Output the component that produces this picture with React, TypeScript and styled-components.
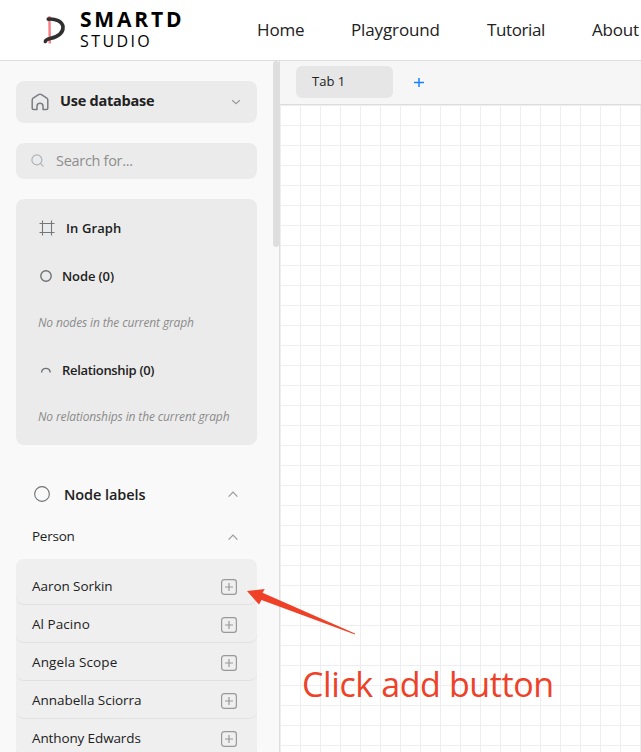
import React from "react";
import styled, { createGlobalStyle } from "styled-components";
import { Search } from "lucide-react";

const GlobalStyle = createGlobalStyle`
  *, *::before, *::after { box-sizing: border-box; }
  body {
    margin: 0;
    overflow: hidden;
    font-family: "Open Sans", "Noto Sans", sans-serif;
    color: #212121;
    background: #fff;
  }
`;

const Page = styled.div`
  position: relative;
  width: 641px;
  height: 752px;
  display: flex;
  flex-direction: column;
  overflow: hidden;
`;

const Label = styled.span<{ $track?: number }>`
  white-space: nowrap;
  letter-spacing: ${(p) => p.$track ?? 0}px;
`;

const Header = styled.header`
  flex: 0 0 61px;
  display: flex;
  border-bottom: 1px solid #dcdee0;
  background: #fff;
`;

const Brand = styled.div`
  flex: 0 0 256px;
  display: flex;
  padding: 14px 0 0 42px;
`;

const BrandText = styled.div`
  display: flex;
  flex-direction: column;
  margin: -7px 0 0 13px;
  color: #000;
`;

const BrandName = styled(Label)`
  font-size: 21px;
  line-height: 24px;
  font-weight: 700;
`;

const BrandSub = styled(Label)`
  font-size: 16px;
  line-height: 20px;
`;

const Nav = styled.nav`
  display: flex;
  padding-left: 1px;
  font-size: 17px;
  line-height: 60px;
`;

const NavItem = styled(Label)<{ $width: number }>`
  flex: 0 0 ${(p) => p.$width}px;
`;

const Body = styled.div`
  flex: 1;
  display: flex;
  min-height: 0;
`;

const Sidebar = styled.aside`
  flex: 0 0 280px;
  display: flex;
  justify-content: space-between;
  background: #f9f9f9;
  border-right: 1px solid #dedede;
`;

const SidebarContent = styled.div`
  width: 257px;
  padding: 20px 0 0 16px;
`;

const ScrollThumb = styled.div`
  width: 6px;
  height: 186px;
  border-radius: 3px;
  background: #dedede;
`;

const DatabaseSelect = styled.div`
  height: 42px;
  display: flex;
  align-items: center;
  padding: 0 15px 0 14px;
  border-radius: 8px;
  background: #ebebeb;
  font-size: 14.5px;
  font-weight: 700;

  ${Label} { flex: 1; margin: -3px 0 0 10px; }
`;

const SearchBox = styled.div`
  height: 36px;
  display: flex;
  align-items: center;
  gap: 11px;
  margin-top: 20px;
  padding: 0 0 1px 14px;
  border-radius: 8px;
  background: #ebebeb;
  color: #8e8e8e;
  font-size: 14.5px;

  svg { color: #b0b4b7; }
`;

const GraphCard = styled.section`
  height: 246px;
  margin-top: 20px;
  padding-top: 5px;
  border-radius: 8px;
  background: #ebebeb;
`;

const CardRow = styled.div<{ $height: number; $left: number; $gap: number }>`
  height: ${(p) => p.$height}px;
  display: flex;
  align-items: center;
  gap: ${(p) => p.$gap}px;
  padding-left: ${(p) => p.$left}px;
  font-size: 13px;
  font-weight: 600;
`;

const EmptyNote = styled.p`
  height: 46px;
  margin: 0;
  padding-left: 22px;
  color: #8b8b8b;
  font-size: 12px;
  line-height: 45px;
  font-style: italic;
`;

const SectionHead = styled.div`
  height: 42px;
  display: flex;
  align-items: center;
  margin-top: 28px;
  padding: 0 17px 0 18px;
  font-size: 14.5px;
  font-weight: 600;

  ${Label} { flex: 1; margin-left: 14px; }
`;

const GroupHead = styled.div`
  height: 44px;
  display: flex;
  align-items: center;
  justify-content: space-between;
  padding: 0 17px 1px 16px;
  font-size: 13.5px;

  ${Label} { margin-top: -1px; }
`;

const PersonList = styled.div`
  border-radius: 8px 8px 0 0;
  background: #efefef;
  padding-top: 8px;
`;

const PersonRow = styled.div`
  height: 38px;
  display: flex;
  align-items: center;
  justify-content: space-between;
  padding: 1px 20px 0 16px;
  border-bottom: 1px solid #e1e1e1;
  border-radius: 0 0 8px 8px;
  font-size: 13.5px;

  svg { margin-top: 1px; }
`;

const Main = styled.main`
  flex: 1;
  min-width: 0;
  display: flex;
  flex-direction: column;
`;

const TabBar = styled.div`
  flex: 0 0 44px;
  display: flex;
  align-items: center;
  gap: 20px;
  padding: 0 0 2px 16px;
  background: #f6f6f6;
  border-bottom: 1px solid #dcdcdc;
`;

const Tab = styled.div`
  width: 97px;
  height: 32px;
  padding-left: 16px;
  border-radius: 6px;
  background: #e6e6e6;
  font-size: 13px;
  line-height: 31px;
`;

const GridCanvas = styled.div`
  flex: 1;
  background-color: #fff;
  background-image:
    linear-gradient(to right, #eeeeee 1px, transparent 1px),
    linear-gradient(to bottom, #eeeeee 1px, transparent 1px);
  background-size: 20px 20px;
`;

const ArrowOverlay = styled.svg`
  position: absolute;
  left: 240px;
  top: 580px;
`;

const Callout = styled.div`
  position: absolute;
  left: 302px;
  top: 660px;
  color: #ee4128;
  font-size: 34px;
  line-height: 48px;
`;

const BrandMark = () => (
  <svg width="25" height="32" viewBox="0 0 25 32" fill="none">
    <path d="M7.4 2.3 7.8 29.5" stroke="#f87d82" strokeWidth="2.4" />
    <path
      d="M6.3 5.1C13 4.4 20.7 7.3 21 13.2C21.2 20.2 14.4 23 8.2 24.6C5.1 25.4 3.5 26 3.4 27.5"
      stroke="#303030"
      strokeWidth="3.6"
      strokeLinecap="round"
    />
  </svg>
);

const HouseIcon = () => (
  <svg width="20" height="20" viewBox="0 0 20 20" fill="none" stroke="#7a7e82" strokeWidth="1.5" strokeLinejoin="round">
    <path d="M2.2 8.2C2.2 7.3 2.5 6.7 3.2 6.2L8.5 2.7Q10 1.7 11.5 2.7L16.8 6.2C17.5 6.7 17.8 7.3 17.8 8.2V16.2Q17.8 17.6 16.4 17.6H13V14.2A3 3 0 0 0 7 14.2V17.6H3.6Q2.2 17.6 2.2 16.2Z" />
  </svg>
);

const FrameIcon = () => (
  <svg width="16" height="16" viewBox="0 0 16 16" fill="none" stroke="#74787c" strokeWidth="1.1">
    <path d="M.5 3.5H15.5M.5 12.5H15.5M3.5 .5V15.5M12.5 .5V15.5" />
  </svg>
);

const Ring = ({ size, width = 1.3 }: { size: number; width?: number }) => (
  <svg width={size} height={size} fill="none" stroke="#6d7276" strokeWidth={width}>
    <circle cx={size / 2} cy={size / 2} r={(size - width) / 2 - 0.1} />
  </svg>
);

const ArcIcon = () => (
  <svg width="12" height="12" viewBox="0 0 12 12" fill="none" stroke="#6d7276" strokeWidth="1.4">
    <path d="M1.7 8.5V7.6A4.3 4.1 0 0 1 10.1 7.6V8.5" />
  </svg>
);

const Caret = ({ down = false }: { down?: boolean }) => (
  <svg width={down ? 12 : 14} height="12" viewBox={down ? "1 0 12 12" : "0 0 14 12"} fill="none" stroke="#999" strokeWidth="1.2">
    <path d={down ? "M3.2 4.2 7 7.6 10.8 4.2" : "M2.6 8.6 7 4.2 11.4 8.6"} />
  </svg>
);

const AddIcon = () => (
  <svg width="16" height="16" viewBox="0 0 16 16" fill="none" stroke="#999">
    <rect x=".6" y=".6" width="14.8" height="14.8" rx="2.6" strokeWidth="1.2" />
    <path d="M4 8H12M8 4V12" strokeWidth="1.2" />
  </svg>
);

const PlusIcon = () => (
  <svg width="12" height="12" viewBox="0 0 12 12" stroke="#1684ff" strokeWidth="1.5">
    <path d="M1 6.5H11M6 2V11" />
  </svg>
);

const navItems = [
  { text: "Home", width: 94, track: -0.15 },
  { text: "Playground", width: 136, track: -0.13 },
  { text: "Tutorial", width: 105, track: -0.4 },
  { text: "About", width: 60, track: -0.2 },
];

const people = [
  { name: "Aaron Sorkin", track: -0.06 },
  { name: "Al Pacino", track: 0.05 },
  { name: "Angela Scope", track: 0.12 },
  { name: "Annabella Sciorra", track: -0.04 },
  { name: "Anthony Edwards", track: -0.12 },
];

export default function App() {
  return (
    <>
      <GlobalStyle />
      <Page>
        <Header>
          <Brand>
            <BrandMark />
            <BrandText>
              <BrandName $track={2.8}>SMARTD</BrandName>
              <BrandSub $track={2.4}>STUDIO</BrandSub>
            </BrandText>
          </Brand>
          <Nav>
            {navItems.map((item) => (
              <NavItem key={item.text} $width={item.width} $track={item.track}>
                {item.text}
              </NavItem>
            ))}
          </Nav>
        </Header>
        <Body>
          <Sidebar>
            <SidebarContent>
              <DatabaseSelect>
                <HouseIcon />
                <Label $track={-0.25}>Use database</Label>
                <Caret down />
              </DatabaseSelect>
              <SearchBox>
                <Search size={15} strokeWidth={2} />
                <Label $track={-0.3}>Search for...</Label>
              </SearchBox>
              <GraphCard>
                <CardRow $height={48} $left={23} $gap={11}>
                  <FrameIcon />
                  <Label $track={0.1}>In Graph</Label>
                </CardRow>
                <CardRow $height={48} $left={24} $gap={10}>
                  <Ring size={12} width={1.4} />
                  <Label $track={-0.1}>Node (0)</Label>
                </CardRow>
                <EmptyNote>
                  <Label $track={-0.13}>No nodes in the current graph</Label>
                </EmptyNote>
                <CardRow $height={48} $left={24} $gap={10}>
                  <ArcIcon />
                  <Label $track={-0.32}>Relationship (0)</Label>
                </CardRow>
                <EmptyNote>
                  <Label $track={-0.13}>No relationships in the current graph</Label>
                </EmptyNote>
              </GraphCard>
              <SectionHead>
                <Ring size={16} width={1.1} />
                <Label $track={-0.08}>Node labels</Label>
                <Caret />
              </SectionHead>
              <GroupHead>
                <Label $track={-0.25}>Person</Label>
                <Caret />
              </GroupHead>
              <PersonList>
                {people.map((p) => (
                  <PersonRow key={p.name}>
                    <Label $track={p.track}>{p.name}</Label>
                    <AddIcon />
                  </PersonRow>
                ))}
              </PersonList>
            </SidebarContent>
            <ScrollThumb />
          </Sidebar>
          <Main>
            <TabBar>
              <Tab>
                <Label>Tab 1</Label>
              </Tab>
              <PlusIcon />
            </TabBar>
            <GridCanvas />
          </Main>
        </Body>
        <ArrowOverlay width="120" height="60">
          <path d="M7 11 24.8 9 22.5 12.8 115 53.4V54.4L21.5 20 19 24.5Z" fill="#ee4128" />
        </ArrowOverlay>
        <Callout>
          <Label $track={-0.4}>Click add button</Label>
        </Callout>
      </Page>
    </>
  );
}
